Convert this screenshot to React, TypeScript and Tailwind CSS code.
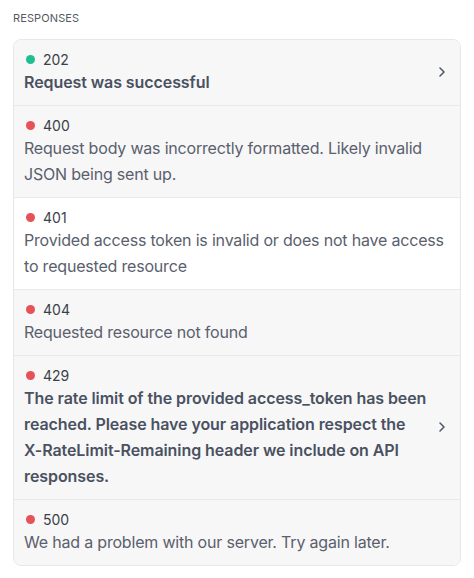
import React from "react";

type Row = { code: string; color: string; desc: React.ReactNode; bold?: boolean; bg: string; chevron?: boolean };

const rows: Row[] = [
  { code: "202", color: "bg-[#1fbf8f]", desc: "Request was successful", bold: true, bg: "bg-[#f7f7f8]", chevron: true },
  { code: "400", color: "bg-[#e5525a]", desc: "Request body was incorrectly formatted. Likely invalid JSON being sent up.", bg: "bg-[#f7f7f8]" },
  { code: "401", color: "bg-[#e5525a]", desc: "Provided access token is invalid or does not have access to requested resource", bg: "bg-white" },
  { code: "404", color: "bg-[#e5525a]", desc: "Requested resource not found", bg: "bg-[#f7f7f8]" },
  {
    code: "429",
    color: "bg-[#e5525a]",
    desc: (
      <>
        The rate limit of the provided access_token has been reached. Please have your application respect the{" "}
        <span className="whitespace-nowrap">X-RateLimit-Remaining</span> header we include on API responses.
      </>
    ),
    bold: true,
    bg: "bg-[#f7f7f8]",
    chevron: true,
  },
  { code: "500", color: "bg-[#e5525a]", desc: "We had a problem with our server. Try again later.", bg: "bg-[#f7f7f8]" },
];

function Chevron() {
  return (
    <svg width="8" height="12" viewBox="0 0 8 12" fill="none" className="shrink-0">
      <path d="M2 2l4 4-4 4" stroke="#4b5563" strokeWidth="1.5" strokeLinecap="round" strokeLinejoin="round" />
    </svg>
  );
}

export default function App() {
  return (
    <div className="w-[474px] h-[578px] bg-white px-[13px] pt-[11px]" style={{ fontFamily: "Inter, 'Noto Sans', sans-serif" }}>
      <div className="text-[11px] leading-[14px] text-[#555a63] tracking-[0.01em] mb-[14px]">RESPONSES</div>
      <div className="border border-[#e6e7ea] rounded-[8px] overflow-hidden">
        {rows.map((r, i) => (
          <div
            key={r.code}
            className={`${r.bg} ${i > 0 ? "border-t border-[#e8e9ec]" : ""} flex items-center gap-[2px] pl-[10px] pr-[14px] pt-[9px] pb-[10px]`}
          >
            <div className="flex-1 min-w-0">
              <div className="flex items-center h-[20px]">
                <span className={`${r.color} w-[9px] h-[9px] rounded-full ml-[2px] mr-[8px]`} />
                <span className="text-[14px] text-[#3b3f47]">{r.code}</span>
              </div>
              <div
                className={`text-[16px] leading-[26px] ${r.bold ? "font-semibold text-[#4a5160] tracking-[-0.005em]" : "text-[#5a606c] tracking-[-0.012em]"}`}
              >
                {r.desc}
              </div>
            </div>
            {r.chevron && <Chevron />}
          </div>
        ))}
      </div>
    </div>
  );
}
